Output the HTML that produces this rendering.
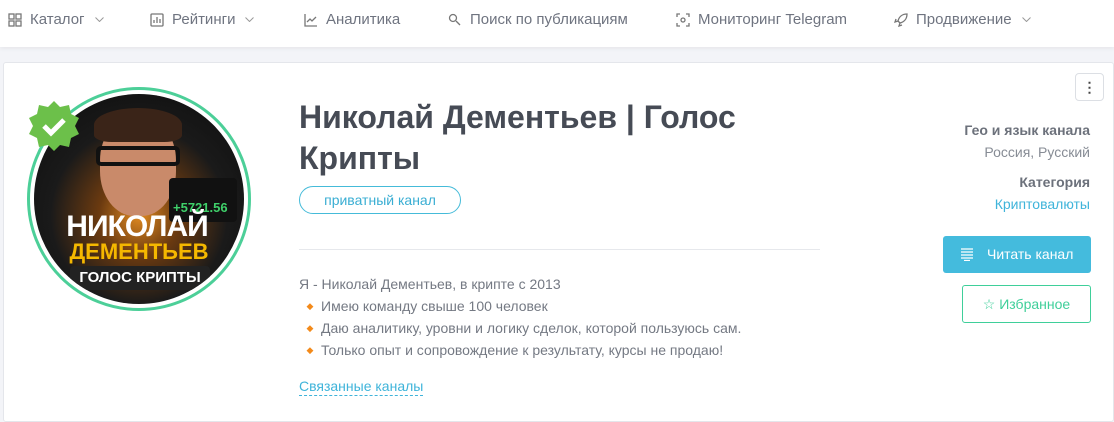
<!DOCTYPE html>
<html><head><meta charset="utf-8"><style>
*{box-sizing:border-box;margin:0;padding:0}
body{width:1114px;height:414px;overflow:hidden;background:#f3f4f8;font-family:"Liberation Sans",sans-serif;position:relative;color:#6b717c}
.nav{position:absolute;left:0;top:0;width:1114px;height:47px;background:#fff;box-shadow:0 2px 4px rgba(0,0,0,.05)}
.ni{position:absolute;top:11px;font-size:15px;color:#6f7480;white-space:nowrap}
.ni svg.ic{position:absolute;left:-22px;top:2px}
.chev{margin-left:10px;vertical-align:2px}
.card{position:absolute;left:3px;top:62px;width:1111px;height:360px;background:#fff;border:1px solid #e4e6eb;border-radius:3px}
.abs{position:absolute}
.ln{height:22px;line-height:22px;white-space:nowrap}
.b{display:inline-block;width:22px;color:#f38a1a;font-size:9px;text-align:center;vertical-align:top}
</style></head><body>
<div class="nav">
 <div class="ni" style="left:30px"><svg class="ic" width="14" height="14" viewBox="0 0 14 14" fill="none" stroke="#777" stroke-width="1.3"><rect x="1" y="1" width="5" height="5"/><rect x="8" y="1" width="5" height="5"/><rect x="1" y="8" width="5" height="5"/><rect x="8" y="8" width="5" height="5"/></svg>Каталог<svg class="chev" width="9" height="5" viewBox="0 0 9 5" fill="none" stroke="#999" stroke-width="1"><path d="M0.5 0.5l4 4 4-4"/></svg></div>
 <div class="ni" style="left:172px"><svg class="ic" width="14" height="14" viewBox="0 0 14 14" fill="none" stroke="#777" stroke-width="1.3"><rect x="1" y="1" width="12" height="12" rx="1"/><path d="M4 10V7M7 10V4M10 10V6"/></svg>Рейтинги<svg class="chev" width="9" height="5" viewBox="0 0 9 5" fill="none" stroke="#999" stroke-width="1"><path d="M0.5 0.5l4 4 4-4"/></svg></div>
 <div class="ni" style="left:326px"><svg class="ic" width="14" height="14" viewBox="0 0 14 14" fill="none" stroke="#777" stroke-width="1.3"><path d="M1 1v12h12M3 9l3-3 2 2 4-4"/></svg>Аналитика</div>
 <div class="ni" style="left:470px"><svg class="ic" width="14" height="14" viewBox="0 0 14 14" fill="none" stroke="#777" stroke-width="1.3"><circle cx="5" cy="5" r="3.5"/><path d="M8 8l4 4"/></svg>Поиск по публикациям</div>
 <div class="ni" style="left:698px"><svg class="ic" width="14" height="14" viewBox="0 0 14 14" fill="none" stroke="#777" stroke-width="1.3"><path d="M1 4V1h3M10 1h3v3M13 10v3h-3M4 13H1v-3"/><circle cx="7" cy="7" r="2"/></svg>Мониторинг Telegram</div>
 <div class="ni" style="left:916px"><svg class="ic" width="14" height="14" viewBox="0 0 14 14" fill="none" stroke="#777" stroke-width="1.3"><path d="M13 1C8 1 5 4 4 8l2 2c4-1 7-4 7-9zM4 8L1 9l1-3M6 10l-1 3 3-1"/></svg>Продвижение<svg class="chev" width="9" height="5" viewBox="0 0 9 5" fill="none" stroke="#999" stroke-width="1"><path d="M0.5 0.5l4 4 4-4"/></svg></div>
</div>
<div class="card"></div>
<div class="abs" style="left:27px;top:87px;width:224px;height:224px;border-radius:50%;border:3px solid #4ccf98;background:#fff;padding:4px">
 <div style="width:100%;height:100%;border-radius:50%;background:radial-gradient(circle at 50% 58%,#e08a20 0%,#6b3a10 25%,#1a1a1a 55%,#0c0c0c 100%);position:relative;overflow:hidden">
  <div class="abs" style="left:66px;top:22px;width:76px;height:100px;border-radius:45%;background:#c98a6a"></div>
  <div class="abs" style="left:60px;top:14px;width:88px;height:34px;border-radius:50% 50% 20% 20%;background:#3a2418"></div>
  <div class="abs" style="left:62px;top:52px;width:84px;height:20px;border:4px solid #111;border-radius:5px"></div>
  <div class="abs" style="left:135px;top:84px;width:68px;height:44px;background:#111;border-radius:4px;font:700 13px 'Liberation Sans';color:#3fd06a;padding:22px 0 0 4px">+5721.56</div>
  <div class="abs" style="left:-5px;top:116px;width:216px;text-align:center;font:900 30px 'Liberation Sans';color:#fff;letter-spacing:-1px">НИКОЛАЙ</div>
  <div class="abs" style="left:0;top:145px;width:210px;text-align:center;font:900 22px 'Liberation Sans';color:#f5b800">ДЕМЕНТЬЕВ</div>
  <div class="abs" style="left:36px;top:172px;width:140px;height:24px;background:#222;border-radius:4px;text-align:center;font:700 15px/24px 'Liberation Sans';color:#fff">ГОЛОС КРИПТЫ</div>
 </div>
</div>
<svg class="abs" style="left:27px;top:99px" width="54" height="54" viewBox="0 0 54 54"><polygon points="27,2 33,8 42,6 44,15 52,19 48,27 52,35 44,39 42,48 33,46 27,52 21,46 12,48 10,39 2,35 6,27 2,19 10,15 12,6 21,8" fill="#6cc04a"/><path d="M17 27l7 7 13-13" stroke="#fff" stroke-width="5" fill="none"/></svg>
<div class="abs" style="left:299px;top:97px;width:520px;font:700 32px/41px 'Liberation Sans';color:#464b55">Николай Дементьев | Голос Крипты</div>
<div class="abs" style="left:299px;top:186px;width:162px;height:28px;border:1px solid #45bbd9;border-radius:14px;text-align:center;font:14px/26px 'Liberation Sans';color:#3aaed3">приватный канал</div>
<div class="abs" style="left:299px;top:249px;width:521px;height:1px;background:#e6e8ec"></div>
<div class="abs" style="left:299px;top:273px;font-size:14px;color:#747983">
 <div class="ln">Я - Николай Дементьев, в крипте с 2013</div>
 <div class="ln"><span class="b">◆</span>Имею команду свыше 100 человек</div>
 <div class="ln"><span class="b">◆</span>Даю аналитику, уровни и логику сделок, которой пользуюсь сам.</div>
 <div class="ln"><span class="b">◆</span>Только опыт и сопровождение к результату, курсы не продаю!</div>
</div>
<div class="abs" style="left:299px;top:377px;font:14px/18px 'Liberation Sans';color:#3fb4da;border-bottom:1px dashed #3fb4da">Связанные каналы</div>
<div class="abs" style="left:1075px;top:73px;width:29px;height:28px;border:1px solid #dcdfe4;border-radius:4px;text-align:center;font:700 14px/26px 'Liberation Sans';color:#444">⋮</div>
<div class="abs" style="right:24px;top:119px;text-align:right;font:14px/22px 'Liberation Sans'">
 <div style="font-weight:700;color:#6c717b">Гео и язык канала</div>
 <div style="color:#878c95">Россия, Русский</div>
 <div style="font-weight:700;color:#6c717b;margin-top:8px">Категория</div>
 <div style="color:#3fb4da">Криптовалюты</div>
</div>
<div class="abs" style="left:943px;top:236px;width:148px;height:37px;background:#44bbdd;border-radius:3px;color:#fff;font:14px/37px 'Liberation Sans';padding-left:18px">
 <svg width="12" height="13" viewBox="0 0 12 13" style="vertical-align:-2px;margin-right:14px" stroke="#fff" stroke-width="1.3"><path d="M0 1h12M0 4h12M0 7h12M0 10h12M3 12.5h6"/></svg>Читать канал</div>
<div class="abs" style="left:962px;top:285px;width:129px;height:38px;border:1px solid #3fcf9a;border-radius:3px;color:#3fcf9a;font:14px/36px 'Liberation Sans';text-align:center">☆ Избранное</div>
</body></html>
